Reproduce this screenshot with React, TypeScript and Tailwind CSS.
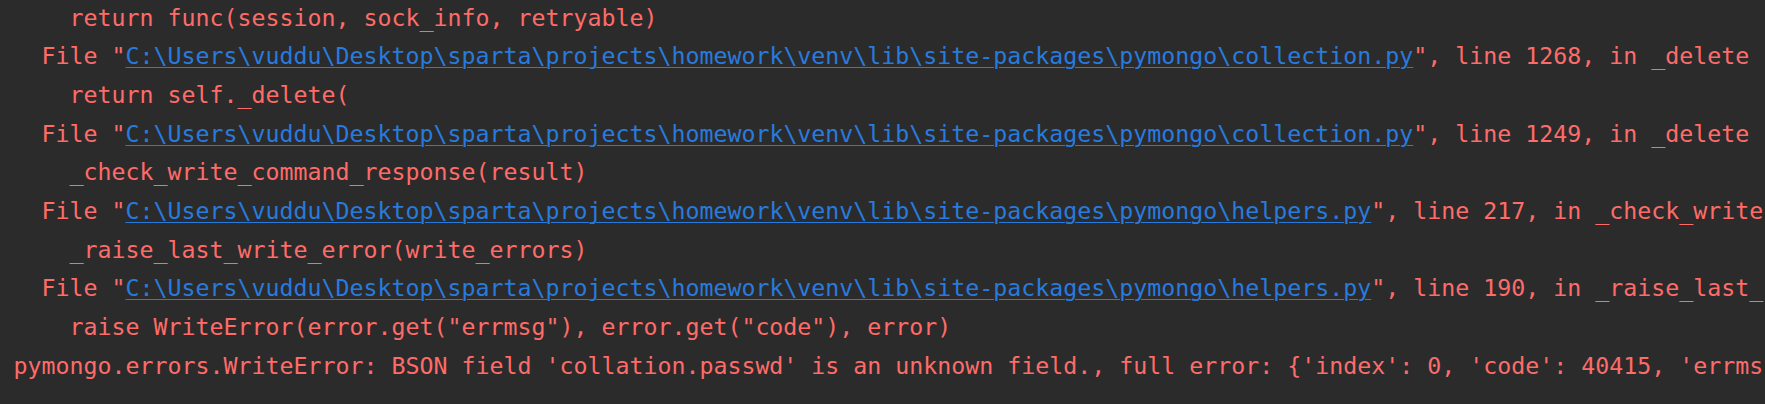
import React from "react";

type Seg = { t: string; link?: boolean };

const base = "C:\\Users\\vuddu\\Desktop\\sparta\\projects\\homework\\venv\\lib\\site-packages\\pymongo\\";

const lines: Seg[][] = [
  [{ t: "    return func(session, sock_info, retryable)" }],
  [{ t: '  File "' }, { t: base + "collection.py", link: true }, { t: '", line 1268, in _delete' }],
  [{ t: "    return self._delete(" }],
  [{ t: '  File "' }, { t: base + "collection.py", link: true }, { t: '", line 1249, in _delete' }],
  [{ t: "    _check_write_command_response(result)" }],
  [{ t: '  File "' }, { t: base + "helpers.py", link: true }, { t: '", line 217, in _check_write' }],
  [{ t: "    _raise_last_write_error(write_errors)" }],
  [{ t: '  File "' }, { t: base + "helpers.py", link: true }, { t: '", line 190, in _raise_last_' }],
  [{ t: '    raise WriteError(error.get("errmsg"), error.get("code"), error)' }],
  [
    {
      t: "pymongo.errors.WriteError: BSON field 'collation.passwd' is an unknown field., full error: {'index': 0, 'code': 40415, 'errms",
    },
  ],
];

export default function App() {
  return (
    <div className="w-[1765px] h-[404px] bg-[#2b2b2b] overflow-hidden">
      <div
        className="flex flex-col -mt-[1.4px] pl-[13.5px] text-[23.26px] leading-[38.67px] text-[#ff6b68] whitespace-pre"
        style={{ fontFamily: '"DejaVu Sans Mono", "Liberation Mono", monospace' }}
      >
        {lines.map((segs, i) => (
          <div key={i}>
            {segs.map((s, j) =>
              s.link ? (
                <span
                  key={j}
                  className="text-[#287bde] underline decoration-[1px] underline-offset-[3px] decoration-[#287bde]"
                >
                  {s.t}
                </span>
              ) : (
                <span key={j}>{s.t}</span>
              )
            )}
          </div>
        ))}
      </div>
    </div>
  );
}
